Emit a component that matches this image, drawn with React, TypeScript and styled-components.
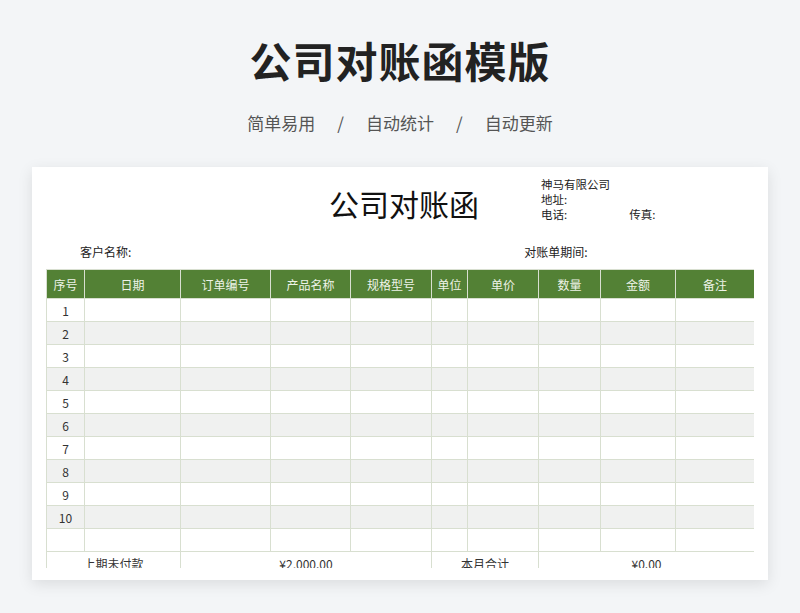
import styled, { createGlobalStyle } from 'styled-components';

const GlobalStyle = createGlobalStyle`
  body {
    margin: 0;
    background: #f3f5f7;
    font-family: 'Noto Sans CJK SC', 'Noto Sans', sans-serif;
  }
`;

const Page = styled.div`
  width: 800px;
  height: 613px;
  overflow: hidden;
  display: flex;
  flex-direction: column;
  align-items: center;
`;

const Heading = styled.h1`
  margin: 34px 0 0;
  font-size: 42px;
  line-height: 52px;
  font-weight: 700;
  color: #222;
  letter-spacing: 1px;
`;

const Subtitle = styled.div`
  margin-top: 25px;
  font-size: 17px;
  line-height: 24px;
  color: #555;
  display: flex;
  gap: 22px;
`;

const Card = styled.div`
  margin-top: 32px;
  width: 736px;
  height: 413px;
  background: #fff;
  box-shadow: 0 4px 14px rgba(0, 0, 0, 0.1);
  box-sizing: border-box;
  padding: 0 14px;
  display: flex;
  flex-direction: column;
  overflow: hidden;
`;

const Top = styled.div`
  position: relative;
  height: 66px;
  display: flex;
  justify-content: center;
`;

const DocTitle = styled.div`
  margin-top: 16px;
  margin-left: 8px;
  font-size: 30px;
  line-height: 40px;
  color: #111;
`;

const Info = styled.div`
  position: absolute;
  left: 495px;
  top: 10px;
  font-size: 11.5px;
  line-height: 15px;
  color: #222;
`;

const Fax = styled.span`
  margin-left: 62px;
`;

const MetaRow = styled.div`
  height: 36px;
  display: flex;
  align-items: center;
  font-size: 12px;
  color: #222;
  padding-left: 34px;
`;

const MetaRight = styled.span`
  margin-left: 393px;
`;

const TableClip = styled.div`
  height: 299px;
  overflow: hidden;
`;

const Table = styled.table`
  border-collapse: collapse;
  width: 708px;
  table-layout: fixed;
  font-size: 12px;
  color: #333;
`;

const Th = styled.th`
  background: #538135;
  color: #eef3e8;
  font-weight: 400;
  height: 28px;
  border: 1px solid #d8dfd0;
  padding: 0;
`;

const Tr = styled.tr<{ $alt?: boolean }>`
  background: ${(p) => (p.$alt ? '#f0f1f0' : '#fff')};
`;

const Td = styled.td`
  height: 22px;
  border: 1px solid #d8dfd0;
  text-align: center;
  padding: 0;
`;

const cols = [38, 96, 90, 80, 81, 36, 71, 62, 75, 79];
const heads = ['序号', '日期', '订单编号', '产品名称', '规格型号', '单位', '单价', '数量', '金额', '备注'];

export default function App() {
  const rows = Array.from({ length: 11 }, (_, i) => i);
  return (
    <Page>
      <GlobalStyle />
      <Heading>公司对账函模版</Heading>
      <Subtitle>
        <span>简单易用</span>
        <span>/</span>
        <span>自动统计</span>
        <span>/</span>
        <span>自动更新</span>
      </Subtitle>
      <Card>
        <Top>
          <DocTitle>公司对账函</DocTitle>
          <Info>
            <div>神马有限公司</div>
            <div>地址:</div>
            <div>
              电话:<Fax>传真:</Fax>
            </div>
          </Info>
        </Top>
        <MetaRow>
          <span>客户名称:</span>
          <MetaRight>对账单期间:</MetaRight>
        </MetaRow>
        <TableClip>
          <Table>
            <colgroup>
              {cols.map((w, i) => (
                <col key={i} style={{ width: w }} />
              ))}
            </colgroup>
            <thead>
              <tr>
                {heads.map((h) => (
                  <Th key={h}>{h}</Th>
                ))}
              </tr>
            </thead>
            <tbody>
              {rows.map((i) => (
                <Tr key={i} $alt={i % 2 === 1}>
                  <Td>{i < 10 ? i + 1 : ''}</Td>
                  {cols.slice(1).map((_, j) => (
                    <Td key={j} />
                  ))}
                </Tr>
              ))}
              <Tr>
                <Td colSpan={2}>上期未付款</Td>
                <Td colSpan={3}>¥2,000.00</Td>
                <Td colSpan={2}>本月合计</Td>
                <Td colSpan={3}>¥0.00</Td>
              </Tr>
            </tbody>
          </Table>
        </TableClip>
      </Card>
    </Page>
  );
}
